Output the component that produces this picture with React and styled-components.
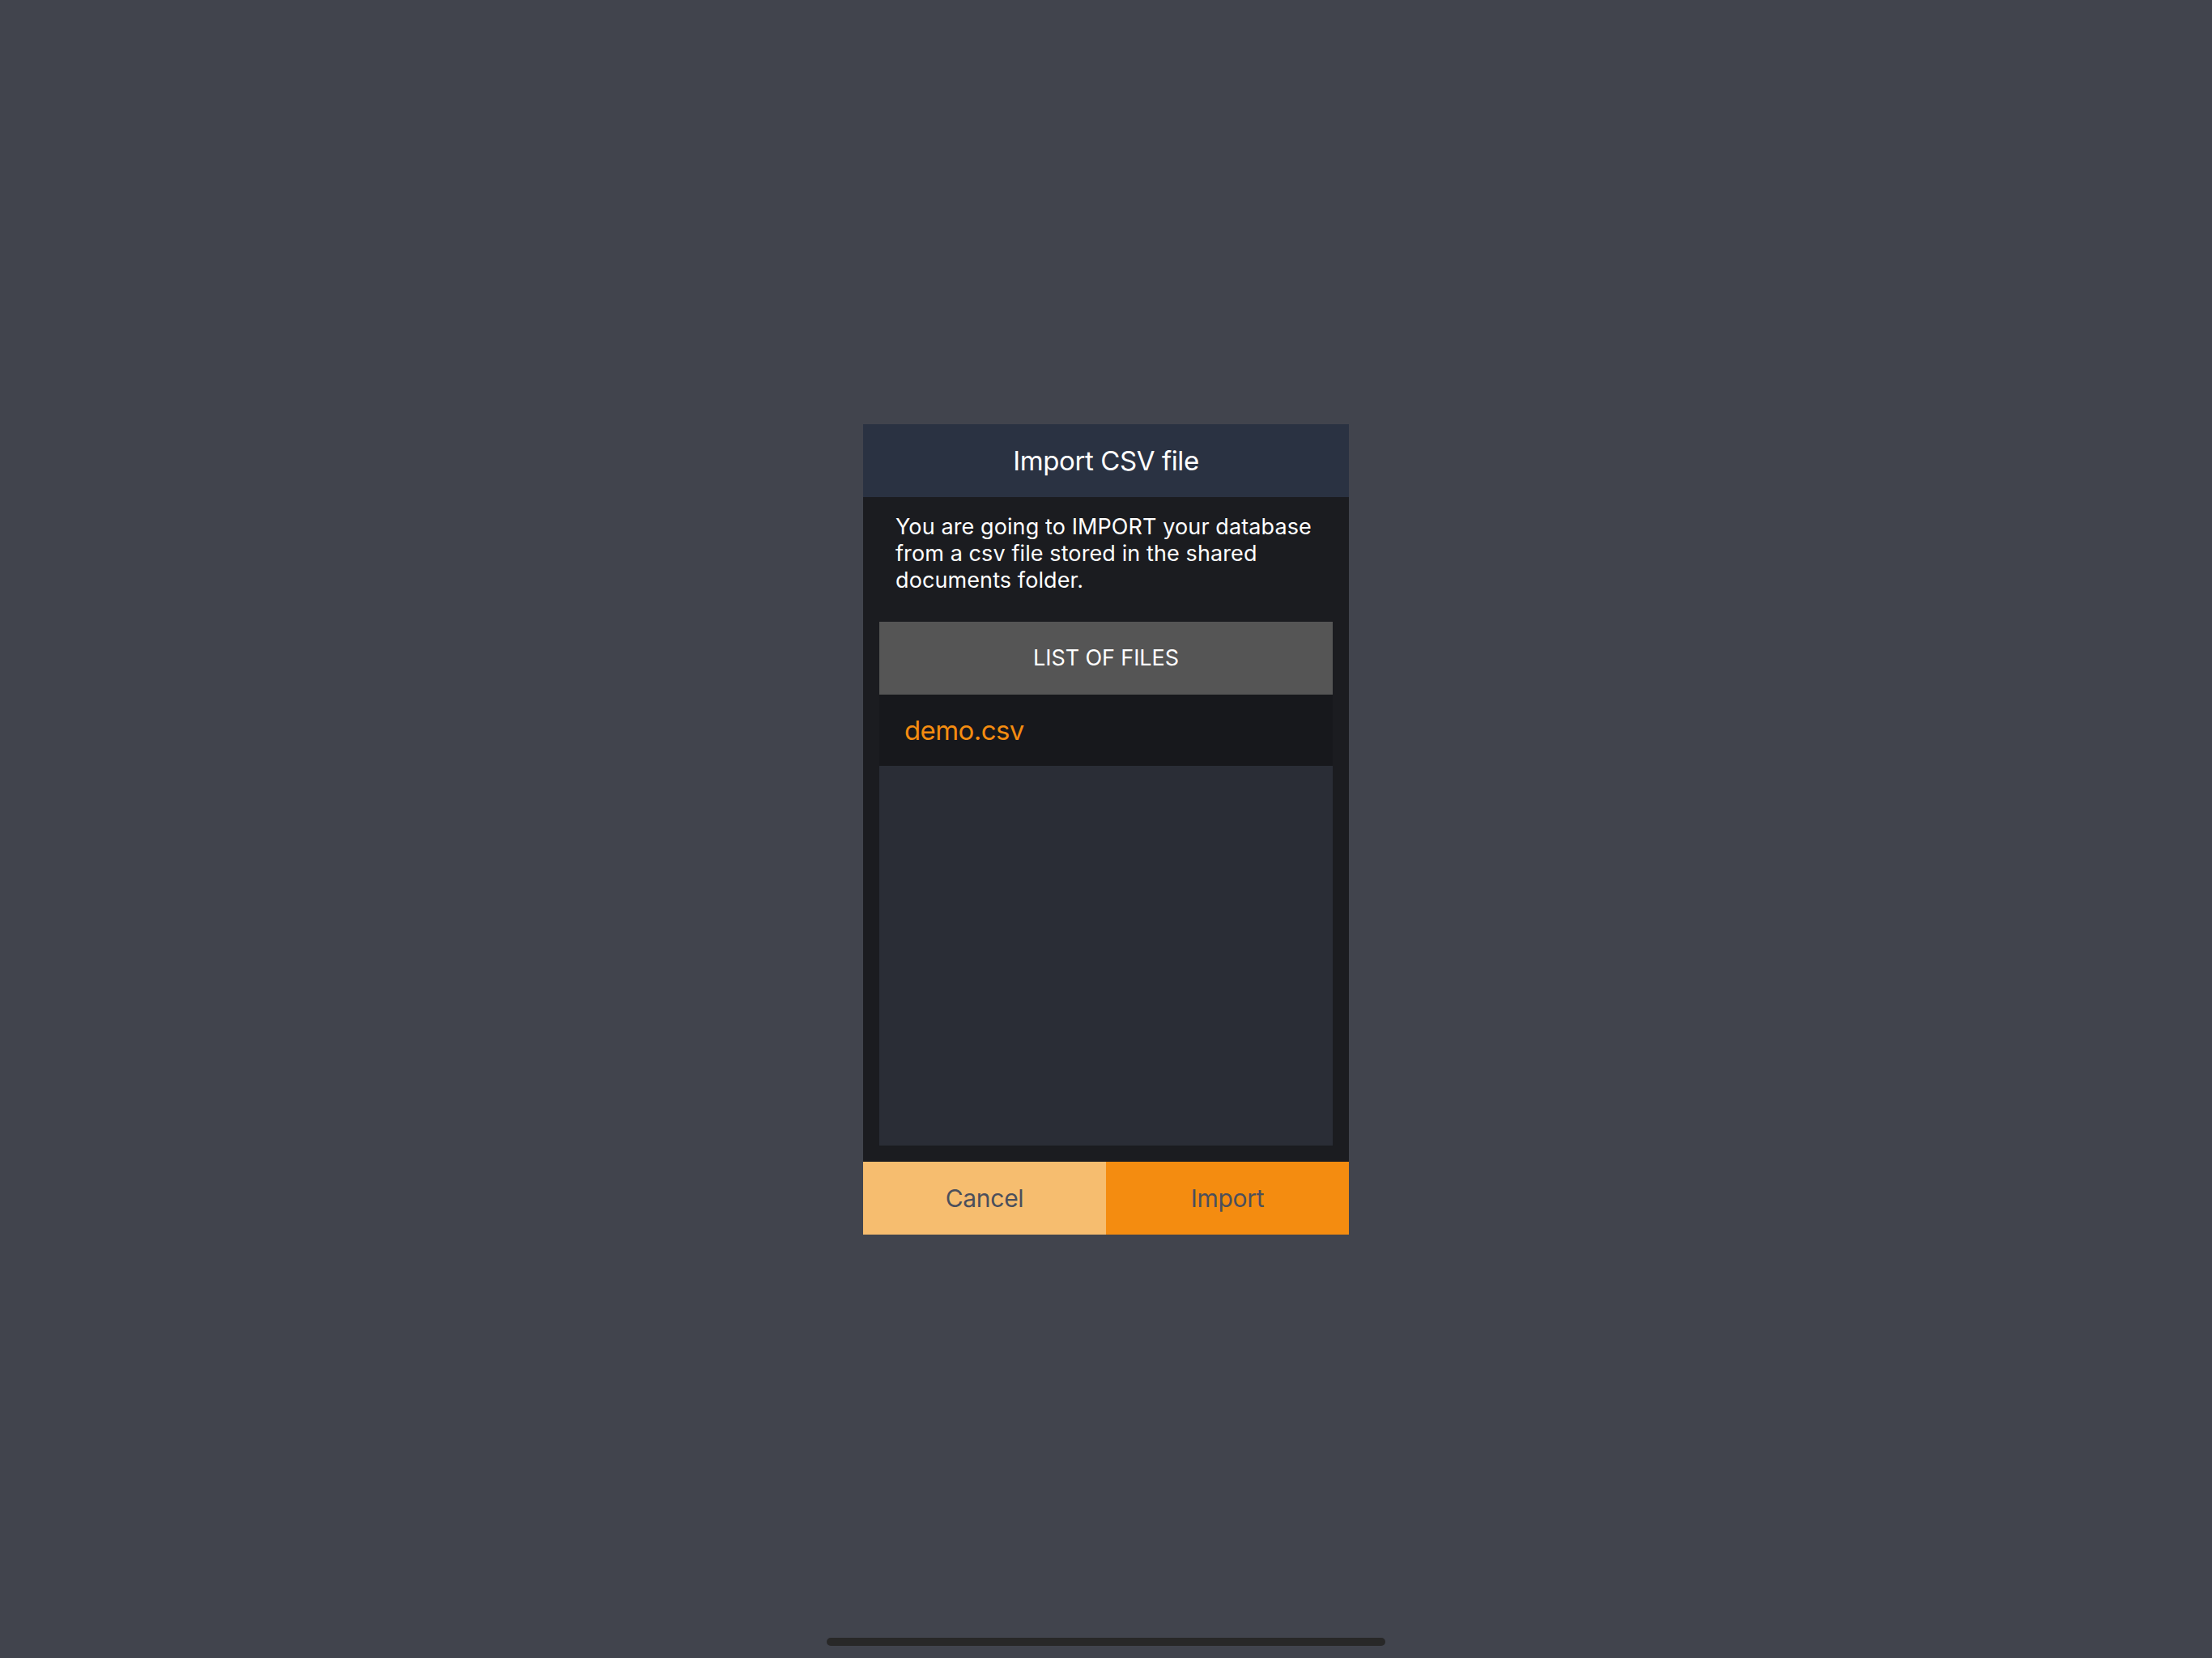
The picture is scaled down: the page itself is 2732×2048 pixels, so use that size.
import styled, { createGlobalStyle } from "styled-components";

const files = ["demo.csv"];

const App = () => {
  return (
    <Page>
      <GlobalStyle />
      <Dialog>
        <Header>Import CSV file</Header>
        <Body>
          <Message>
            You are going to IMPORT your database from a csv file stored in the
            shared documents folder.
          </Message>
          <FileList>
            <ListHeader>LIST OF FILES</ListHeader>
            {files.map((name) => (
              <FileRow key={name}>{name}</FileRow>
            ))}
            <ListEmpty />
          </FileList>
        </Body>
        <Buttons>
          <ActionButton $bg="#f6bd6f">Cancel</ActionButton>
          <ActionButton $bg="#f48c10">Import</ActionButton>
        </Buttons>
      </Dialog>
      <HomeIndicator />
    </Page>
  );
};

const GlobalStyle = createGlobalStyle`
  html, body {
    margin: 0;
    padding: 0;
    background: #41444d;
  }
  body {
    font-family: "Inter", "Roboto", sans-serif;
  }
`;

const Page = styled.div`
  width: 2732px;
  height: 2048px;
  position: relative;
  display: flex;
  align-items: center;
  justify-content: center;
  background: #41444d;
  overflow: hidden;
`;

const Dialog = styled.div`
  width: 600px;
  display: flex;
  flex-direction: column;
  background: #1b1c20;
`;

const Header = styled.div`
  height: 90px;
  display: flex;
  align-items: center;
  justify-content: center;
  background: #2a3242;
  color: #ffffff;
  font-size: 33px;
  letter-spacing: -0.4px;
`;

const Body = styled.div`
  display: flex;
  flex-direction: column;
  padding: 20px 20px 20px;
`;

const Message = styled.div`
  padding: 0 20px;
  color: #ffffff;
  font-size: 27px;
  line-height: 33px;
  letter-spacing: 0.1px;
  margin-bottom: 35px;
`;

const FileList = styled.div`
  display: flex;
  flex-direction: column;
  background: #2a2d36;
`;

const ListHeader = styled.div`
  height: 90px;
  display: flex;
  align-items: center;
  justify-content: center;
  background: #555555;
  color: #ffffff;
  font-size: 27px;
  letter-spacing: -0.1px;
`;

const FileRow = styled.div`
  height: 88px;
  display: flex;
  align-items: center;
  padding: 0 31px;
  background: #17181c;
  color: #f48c10;
  font-size: 33px;
  letter-spacing: -0.6px;
`;

const ListEmpty = styled.div`
  height: 469px;
`;

const Buttons = styled.div`
  display: flex;
  height: 90px;
`;

const ActionButton = styled.div`
  flex: 1;
  display: flex;
  align-items: center;
  justify-content: center;
  background: ${(p) => p.$bg};
  color: #4b4f5c;
  font-size: 30px;
  letter-spacing: -0.3px;
`;

const HomeIndicator = styled.div`
  position: absolute;
  left: 1021px;
  bottom: 15px;
  width: 690px;
  height: 10px;
  border-radius: 5px;
  background: #282828;
`;

export default App;
